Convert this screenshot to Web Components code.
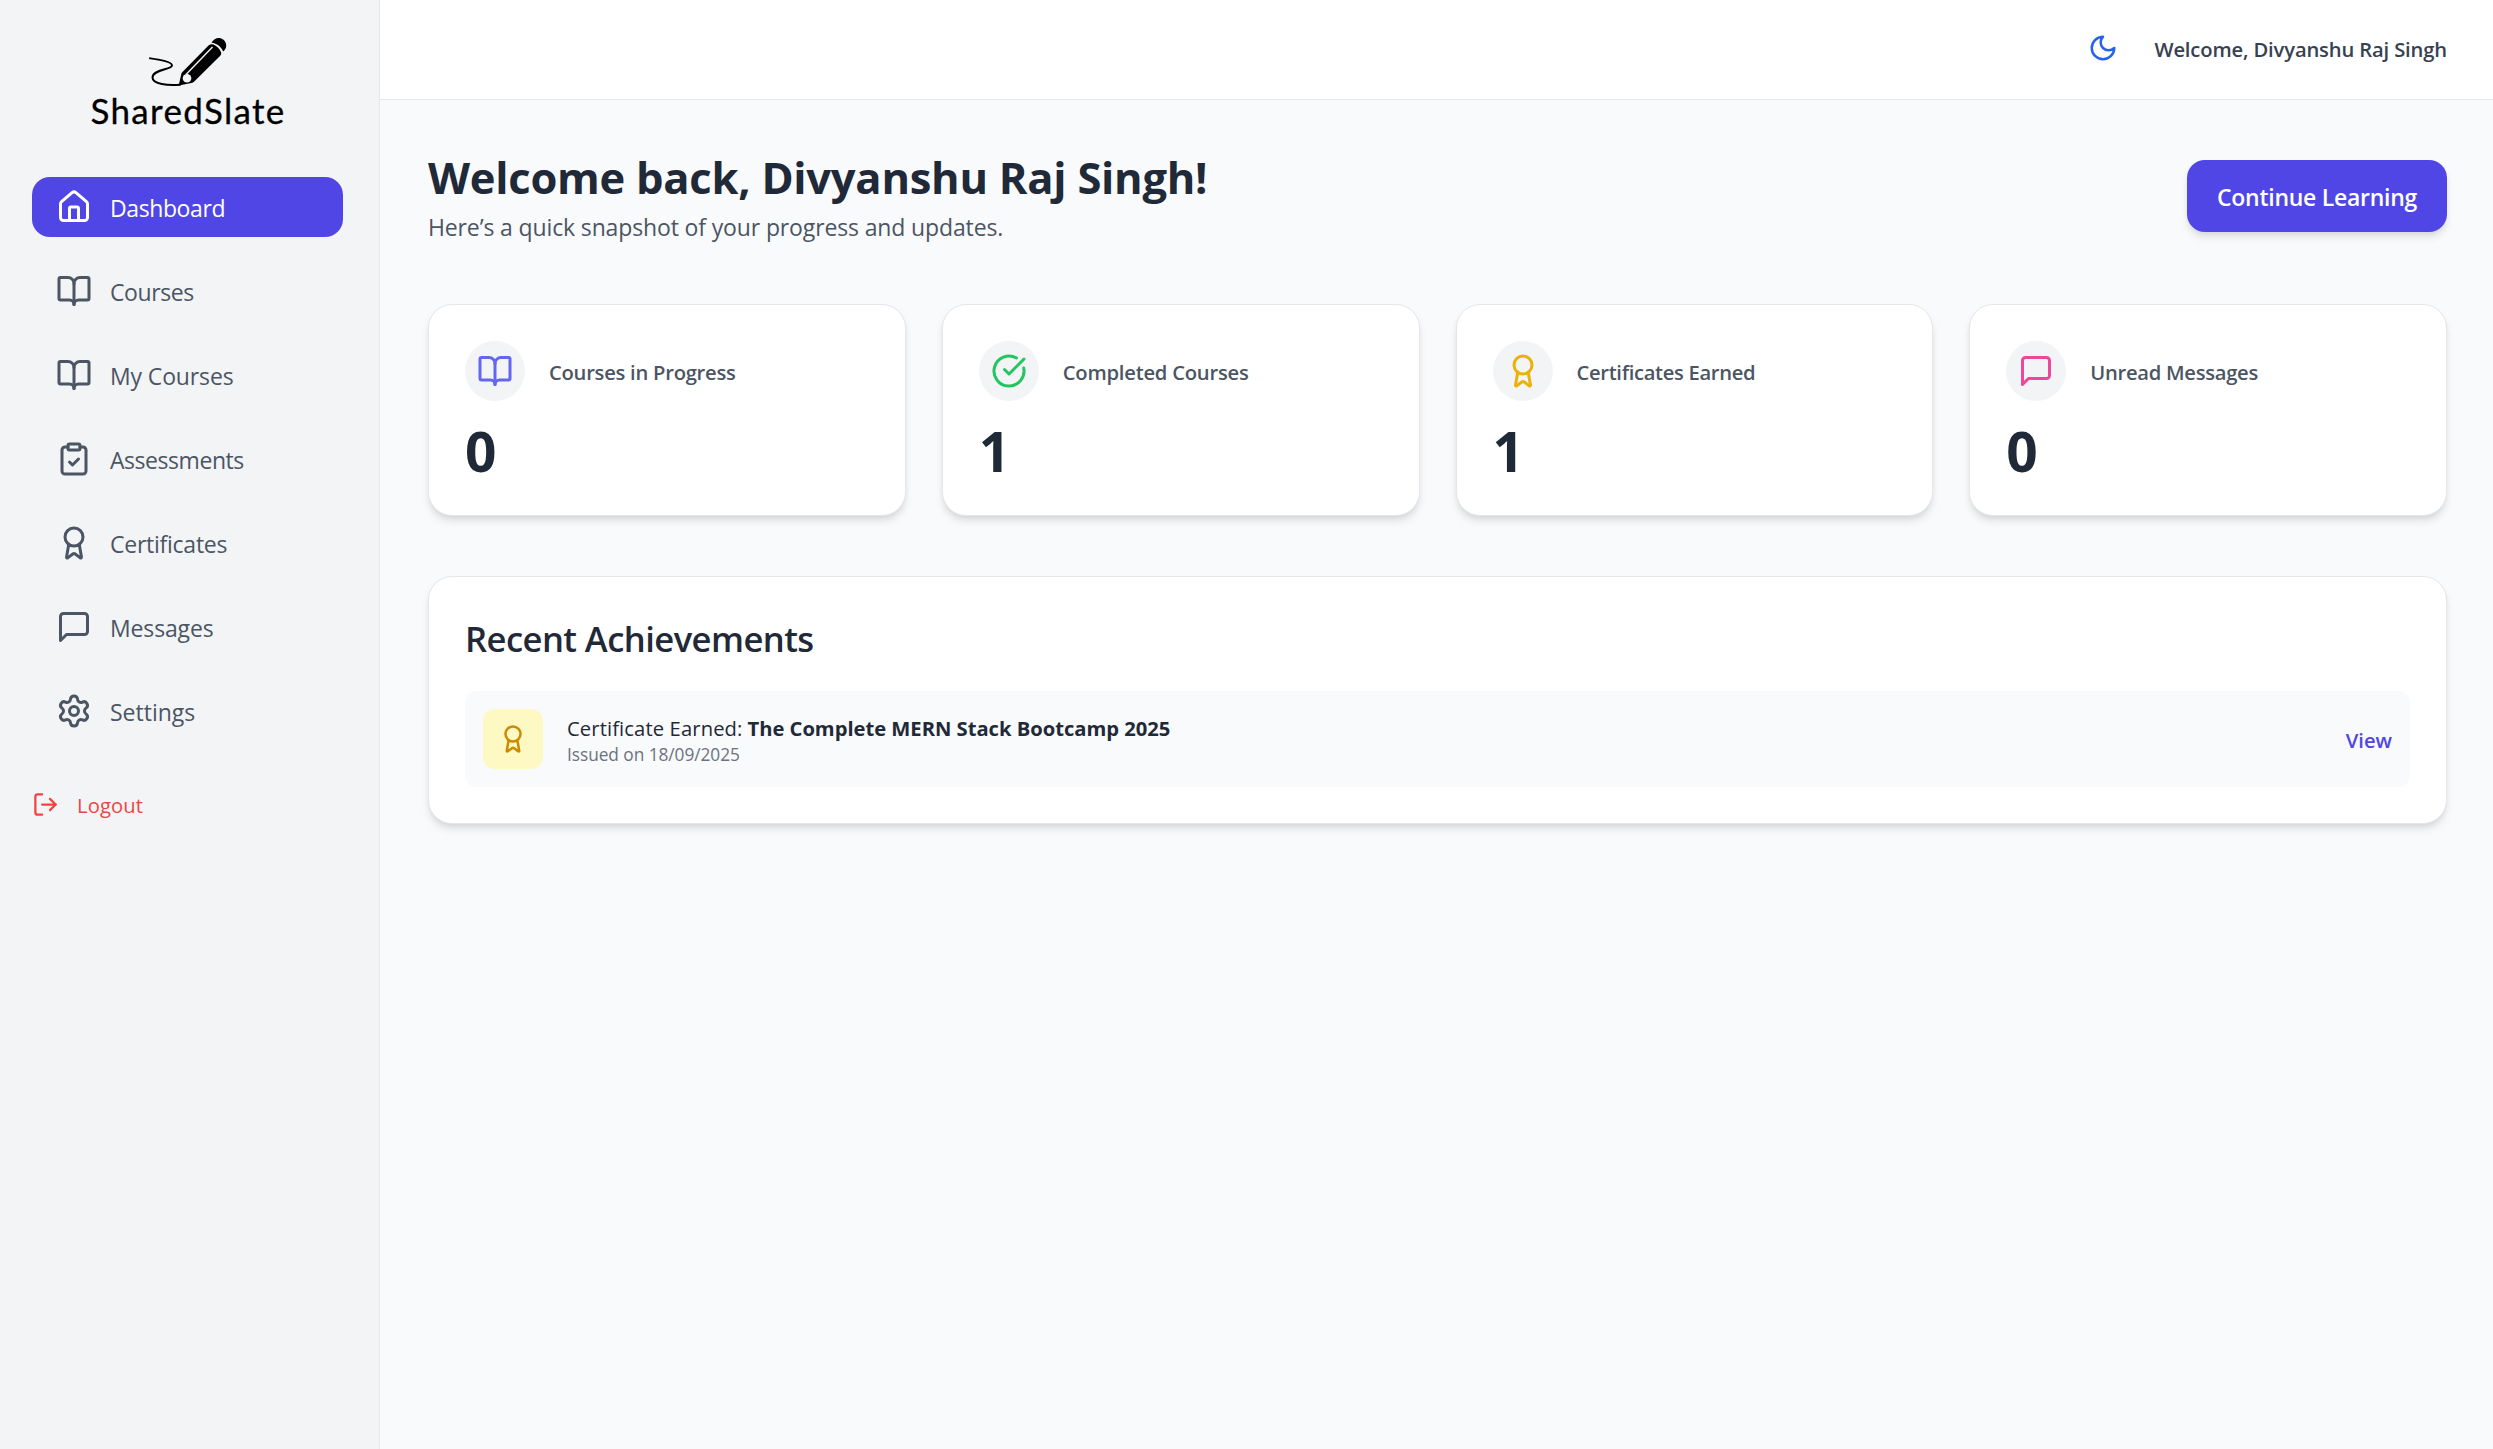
<!DOCTYPE html>
<html lang="en">
<head>
<meta charset="utf-8">
<title>SharedSlate</title>
<style>
html,body{margin:0;height:100%}
body{font-family:"Open Sans","Noto Sans",sans-serif;background:#f9fafc;color:#1f2937;overflow:hidden}
</style>
</head>
<body>
<slate-app></slate-app>
<script>
const ICONS = {
  home:'<path d="M15 21v-8a1 1 0 0 0-1-1h-4a1 1 0 0 0-1 1v8"/><path d="M3 10a2 2 0 0 1 .709-1.528l7-5.999a2 2 0 0 1 2.582 0l7 5.999A2 2 0 0 1 21 10v9a2 2 0 0 1-2 2H5a2 2 0 0 1-2-2z"/>',
  book:'<path d="M12 7v14"/><path d="M3 18a1 1 0 0 1-1-1V4a1 1 0 0 1 1-1h5a4 4 0 0 1 4 4 4 4 0 0 1 4-4h5a1 1 0 0 1 1 1v13a1 1 0 0 1-1 1h-6a3 3 0 0 0-3 3 3 3 0 0 0-3-3z"/>',
  clipboard:'<rect x="8" y="2" width="8" height="4" rx="1"/><path d="M16 4h2a2 2 0 0 1 2 2v14a2 2 0 0 1-2 2H6a2 2 0 0 1-2-2V6a2 2 0 0 1 2-2h2"/><path d="m9 14 2 2 4-4"/>',
  award:'<path d="m15.477 12.89 1.515 8.526a.5.5 0 0 1-.81.47l-3.58-2.687a1 1 0 0 0-1.197 0l-3.586 2.686a.5.5 0 0 1-.81-.469l1.514-8.526"/><circle cx="12" cy="8" r="6"/>',
  message:'<path d="M21 15a2 2 0 0 1-2 2H7l-4 4V5a2 2 0 0 1 2-2h14a2 2 0 0 1 2 2z"/>',
  settings:'<path d="M9.671 4.136a2.34 2.34 0 0 1 4.659 0 2.34 2.34 0 0 0 3.319 1.915 2.34 2.34 0 0 1 2.33 4.033 2.34 2.34 0 0 0 0 3.831 2.34 2.34 0 0 1-2.33 4.033 2.34 2.34 0 0 0-3.319 1.915 2.34 2.34 0 0 1-4.659 0 2.34 2.34 0 0 0-3.32-1.915 2.34 2.34 0 0 1-2.33-4.033 2.34 2.34 0 0 0 0-3.831A2.34 2.34 0 0 1 6.35 6.051a2.34 2.34 0 0 0 3.319-1.915"/><circle cx="12" cy="12" r="3"/>',
  check:'<path d="M21.801 10A10 10 0 1 1 17 3.335"/><path d="m9 11 3 3L22 4"/>',
  logout:'<path d="M9 21H5a2 2 0 0 1-2-2V5a2 2 0 0 1 2-2h4"/><path d="m16 17 5-5-5-5"/><path d="M21 12H9"/>',
  moon:'<path d="M12 3a6 6 0 0 0 9 9 9 9 0 1 1-9-9Z"/>'
};

function define(name, render) {
  customElements.define(name, class extends HTMLElement {
    connectedCallback() {
      if (this.shadowRoot) return;
      this.attachShadow({mode:'open'}).innerHTML = render(this);
    }
  });
}
const at = (el, n, d='') => el.getAttribute(n) ?? d;

define('slate-icon', el => `
<style>:host{display:block;flex:none;width:${at(el,'size',36)}px;height:${at(el,'size',36)}px}svg{display:block;width:100%;height:100%}</style>
<svg viewBox="0 0 24 24" fill="none" stroke="currentColor" stroke-width="2" stroke-linecap="round" stroke-linejoin="round">${ICONS[at(el,'name')]}</svg>`);

/* single line of text: size, weight, tracking and baseline nudge */
define('slate-text', el => `
<style>:host{display:block;white-space:nowrap;font-size:${at(el,'size',23)}px;font-weight:${at(el,'weight',400)};letter-spacing:${at(el,'track',0)}px;line-height:${at(el,'lh',36)}px;padding-top:${at(el,'drop',0)}px}</style><slot></slot>`);

define('slate-logo', () => `
<style>
:host{display:flex;flex-direction:column;align-items:center;height:141px;padding-top:37px;box-sizing:border-box;color:#000}
svg{display:block;width:80px;height:52px}
slate-text{font-family:Lato,"Open Sans",sans-serif;-webkit-text-stroke:.3px #000;padding-left:1px}
</style>
<svg viewBox="148 37 80 52">
<path d="M150 58.3C158 59.5 172 61.500 172 65.500C172 69.500 152.500 69.500 152.500 77.500C152.500 84.500 168 85.500 180 84.700" fill="none" stroke="#000" stroke-width="2" stroke-linecap="round"/>
<path d="M178.700 85.500L181.300 74Q181.500 73 182.200 72.300L208.500 45.500Q211 43.500 213.500 44.500Q219 47 221.200 52.500Q221.500 54.500 220 56L194 81.800Q193 82.800 191.500 83Z" fill="#000"/>
<path d="M186 74.500L212.500 47" stroke="#f3f4f6" stroke-width="1.400"/>
<circle cx="187" cy="78.300" r="4.300" fill="#f3f4f6"/>
<path d="M211.500 42.700C214 38 219.500 36.300 223.500 39.700C227.500 43.500 226.800 48.300 223.200 51.500C221 46.500 217 43.300 211.500 42.700Z" fill="#000"/>
</svg>
<slate-text size="35" lh="36" track="1.3" drop="3">SharedSlate</slate-text>`);

define('slate-nav-item', el => `
<style>
:host{display:flex;align-items:center;gap:18px;height:60px;padding:0 24px;border-radius:18px;color:#4b5563}
:host([active]){background:#4f46e5;color:#fff}
</style>
<slate-icon name="${at(el,'icon')}"></slate-icon>
<slate-text size="23" drop="2" track="${at(el,'track',0)}"><slot></slot></slate-text>`);

define('slate-sidebar', () => `
<style>
:host{display:flex;flex-direction:column;width:380px;flex:none;box-sizing:border-box;background:#f3f4f6;border-right:1px solid #e5e7eb;padding:0 36px 0 32px}
nav{display:flex;flex-direction:column;gap:24px;margin-top:36px}
.out{display:flex;align-items:center;gap:18px;margin-top:44px;color:#ef4444}
</style>
<slate-logo></slate-logo>
<nav>
<slate-nav-item active icon="home" track="-0.4">Dashboard</slate-nav-item>
<slate-nav-item icon="book" track="-0.4">Courses</slate-nav-item>
<slate-nav-item icon="book" track="-0.13">My Courses</slate-nav-item>
<slate-nav-item icon="clipboard" track="-0.45">Assessments</slate-nav-item>
<slate-nav-item icon="award" track="-0.25">Certificates</slate-nav-item>
<slate-nav-item icon="message" track="-0.14">Messages</slate-nav-item>
<slate-nav-item icon="settings" track="0">Settings</slate-nav-item>
</nav>
<div class="out"><slate-icon name="logout" size="27"></slate-icon><slate-text size="20.2" drop="2" track="0.1">Logout</slate-text></div>`);

define('slate-header', () => `
<style>
:host{display:flex;align-items:center;justify-content:flex-end;gap:36px;height:100px;box-sizing:border-box;flex:none;background:#fff;border-bottom:1px solid #e5e7eb;padding:0 46px 3px 0}
slate-icon{color:#2563eb}slate-text{color:#374151}
</style>
<slate-icon name="moon" size="30"></slate-icon>
<slate-text size="20.2" weight="600" drop="2" track="-0.145">Welcome, Divyanshu Raj Singh</slate-text>`);

define('slate-button', () => `
<style>:host{display:flex;align-items:center;justify-content:center;box-sizing:border-box;width:260px;height:72px;border-radius:18px;background:#4f46e5;color:#fff;box-shadow:0 6px 9px -1.5px #0000001a,0 3px 6px -3px #0000001a}</style>
<slate-text size="23" weight="600" drop="2" track="-0.27"><slot></slot></slate-text>`);

define('slate-stat', el => `
<style>
:host{display:block;box-sizing:border-box;height:212px;border:1px solid #e5e7eb;border-radius:24px;background:#fff;padding:36px;box-shadow:0 6px 9px -1.5px #0000001a,0 3px 6px -3px #0000001a}
.top{display:flex;align-items:center;gap:24px;color:#4b5563}
.disc{display:flex;align-items:center;justify-content:center;width:60px;height:60px;border-radius:50%;background:#f3f4f6;color:${at(el,'tint')}}
.num{margin-top:18px}
</style>
<div class="top"><div class="disc"><slate-icon name="${at(el,'icon')}"></slate-icon></div><slate-text size="20.2" weight="600" drop="2" track="${at(el,'track',0)}"><slot></slot></slate-text></div>
<slate-text class="num" size="55" weight="700" lh="60" drop="2">${at(el,'value')}</slate-text>`);

define('slate-achievement', () => `
<style>
:host{display:flex;align-items:center;gap:24px;height:96px;box-sizing:border-box;padding:0 18px;border-radius:12px;background:#f9fafb}
.badge{display:flex;align-items:center;justify-content:center;width:60px;height:60px;border-radius:12px;background:#fef9c3;color:#ca8a04}
.body{flex:1;padding-top:2px}
.row{display:flex;gap:5px}
.date{color:#6b7280}.view{color:#4f46e5}
</style>
<div class="badge"><slate-icon name="award" size="30"></slate-icon></div>
<div class="body">
<div class="row"><slate-text size="20.2" lh="28" weight="500" track="0.12"><slot name="kind"></slot></slate-text><slate-text size="20.2" lh="28" weight="700" track="-0.02"><slot name="title"></slot></slate-text></div>
<slate-text class="date" size="17.3" lh="24" drop="1" track="-0.05"><slot name="date"></slot></slate-text>
</div>
<slate-text class="view" size="20.2" weight="600" drop="2">View</slate-text>`);

define('slate-panel', () => `
<style>
:host{display:block;box-sizing:border-box;height:248px;border:1px solid #e5e7eb;border-radius:24px;background:#fff;padding:36px;box-shadow:0 6px 9px -1.5px #0000001a,0 3px 6px -3px #0000001a}
.title{margin-bottom:26px}
</style>
<slate-text class="title" size="34.6" weight="600" lh="52" track="-0.55"><slot name="title"></slot></slate-text><slot></slot>`);

define('slate-app', () => `
<style>
:host{display:flex;height:100vh}
.main{display:flex;flex-direction:column;flex:1;min-width:0}
.content{padding:48px 46px 0 48px}
.hero{display:flex;justify-content:space-between;align-items:center;height:96px}
.hero slate-text{color:#1f2937}.hero .sub{color:#4b5563}
.grid{display:grid;grid-template-columns:repeat(4,1fr);gap:36px;margin:60px 0}
</style>
<slate-sidebar></slate-sidebar>
<div class="main">
<slate-header></slate-header>
<div class="content">
<div class="hero"><div><slate-text size="43.5" weight="700" lh="60" track="-0.25">Welcome back, Divyanshu Raj Singh!</slate-text><slate-text class="sub" size="23" drop="1" track="-0.135">Here’s a quick snapshot of your progress and updates.</slate-text></div><slate-button>Continue Learning</slate-button></div>
<div class="grid">
<slate-stat icon="book" tint="#6366f1" value="0" track="-0.26">Courses in Progress</slate-stat>
<slate-stat icon="check" tint="#22c55e" value="1" track="-0.22">Completed Courses</slate-stat>
<slate-stat icon="award" tint="#eab308" value="1" track="-0.32">Certificates Earned</slate-stat>
<slate-stat icon="message" tint="#ec4899" value="0" track="-0.28">Unread Messages</slate-stat>
</div>
<slate-panel><span slot="title">Recent Achievements</span>
<slate-achievement><span slot="kind">Certificate Earned:</span><span slot="title">The Complete MERN Stack Bootcamp 2025</span><span slot="date">Issued on 18/09/2025</span></slate-achievement>
</slate-panel>
</div>
</div>`);
</script>
</body>
</html>
